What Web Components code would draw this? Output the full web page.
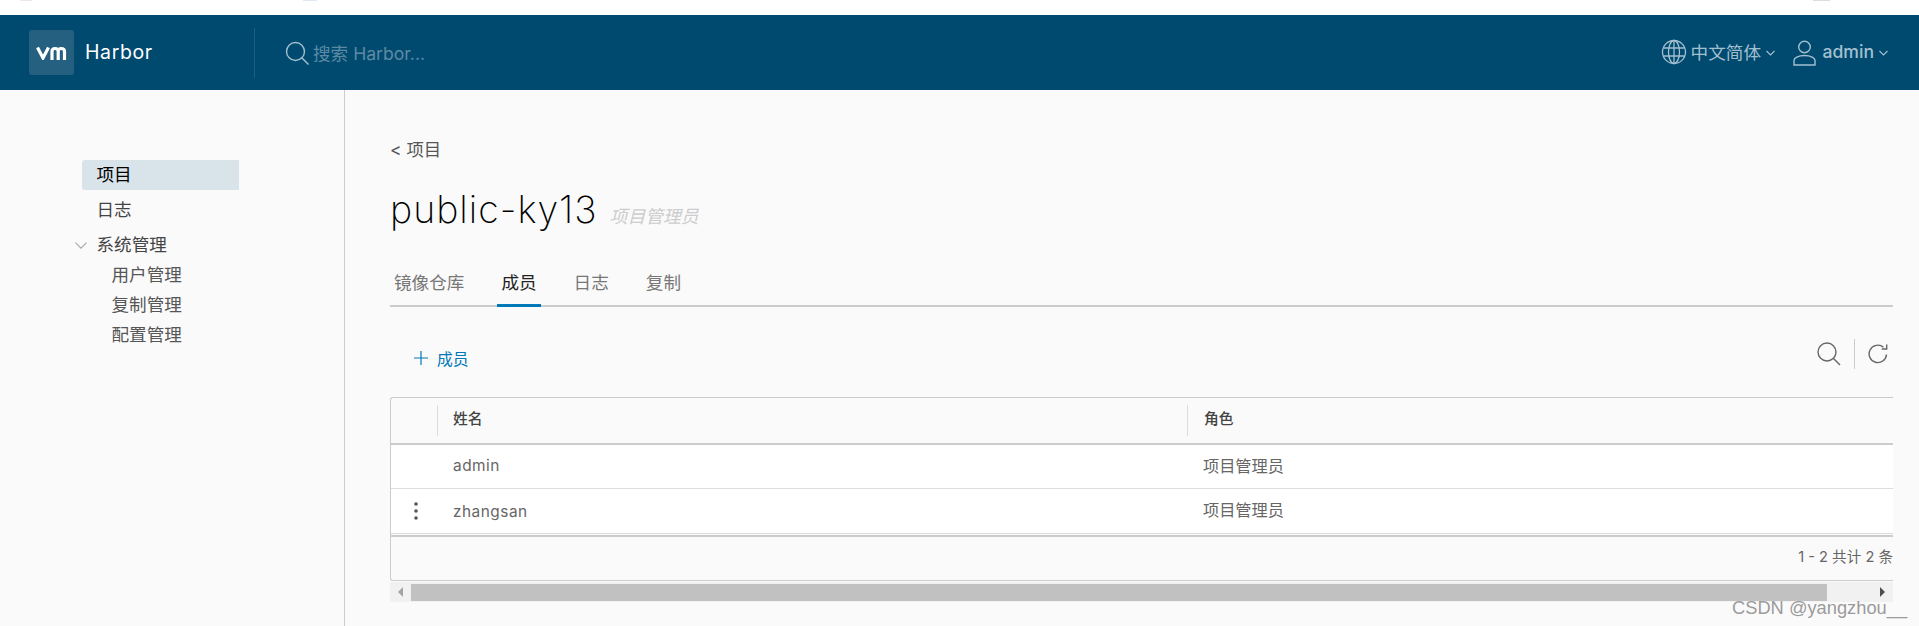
<!DOCTYPE html>
<html lang="zh"><head><meta charset="utf-8"><title>Harbor</title>
<style>
html,body{margin:0;height:626px;overflow:hidden;background:#fafafa;font-family:Inter,"Noto Sans CJK SC",sans-serif}
</style></head><body>
<harbor-app></harbor-app>
<script>
const def=(name,html)=>customElements.define(name,class extends HTMLElement{constructor(){super();this.attachShadow({mode:'open'}).innerHTML=html}});
def('harbor-header',`<style>
:host{display:flex;align-items:center;height:75px;background:#004a70;color:#fff;box-sizing:border-box}
.logo{width:45px;height:45px;margin-left:29px;border-radius:3px;background:#256080;display:flex;align-items:center;justify-content:center}
.name{margin-left:11px;width:169px;font-size:19.500px;letter-spacing:.6px;margin-top:-1px}
.sep{width:1px;height:50px;background:#1d5f82}
.s{margin-left:30px;display:block}
.ph{margin-left:4px;font-size:17.6px;color:#5d8aa3;flex:1;margin-top:-1px}
.r{display:flex;align-items:center;color:#a3c0cf;font-size:17.6px;margin-top:-2px}
.u{font-weight:500;font-size:17.6px}
svg{display:block}
</style>
<div class="logo"><svg width="31" height="14" viewBox="0 0 31 14" fill="none" stroke="#fff" stroke-width="3.200"><path d="M1.500 1.500l5.500 10.500 5.500-10.500"/><path d="M16 14V5.500c0-2 1.200-3 3-3s3.200 1 3.200 3V14M22.200 5.500c0-2 1.200-3 3-3s3.300 1 3.300 3V14"/></svg></div>
<div class="name">Harbor</div><div class="sep"></div>
<svg class="s" width="24" height="24" viewBox="0 0 24 24" fill="none" stroke="#a3c0cf" stroke-width="1.400"><circle cx="10.500" cy="10.500" r="9"/><path d="M17 17l6.500 6.500"/></svg>
<div class="ph">搜索 Harbor...</div>
<div class="r">
<svg width="26" height="26" viewBox="0 0 26 26" fill="none" stroke="#a3c0cf" stroke-width="1.300" style="margin-right:4px"><circle cx="13" cy="13" r="11.500"/><ellipse cx="13" cy="13" rx="5.500" ry="11.500"/><path d="M13 1.500v23M2.500 9h21M2.500 17h21"/></svg>
<span>中文简体</span><svg width="9" height="6" viewBox="0 0 9 6" fill="none" stroke="#a3c0cf" stroke-width="1.100" style="margin:2px 18px 0 5px"><path d="M.5 1l4 4 4-4"/></svg>
<svg width="23" height="26" viewBox="0 0 23 26" fill="none" stroke="#a3c0cf" stroke-width="1.400" style="margin-right:6.500px;margin-top:2px"><circle cx="11.500" cy="7" r="5.800"/><path d="M1 25v-4.500c0-2.500 4-5 10.500-5s10.500 2.500 10.500 5V25z"/></svg>
<span class="u">admin</span><svg width="9" height="6" viewBox="0 0 9 6" fill="none" stroke="#a3c0cf" stroke-width="1.100" style="margin:2px 31px 0 5px"><path d="M.5 1l4 4 4-4"/></svg>
</div>`);
def('nav-item',`<style>
:host{display:block;box-sizing:border-box;width:157px;margin-left:82px;height:30px;line-height:30px;padding-left:14.500px;font-size:17.6px;color:#444;border-radius:3px 0 0 3px;position:relative;white-space:nowrap}
:host([active]){background:#d9e4ea;color:#000}
:host([sub]){height:29.800px;line-height:29.800px;padding-left:29.500px;color:#565656}
</style><slot></slot><slot name="toggle"></slot>`);
def('side-nav',`<style>
:host{display:block;height:536px;border-right:1px solid #ccc;padding-top:70px;flex:none;box-sizing:border-box;width:345px}
.g{display:flex;flex-direction:column;gap:5px}
svg{position:absolute;left:-7px;top:12px}
</style>
<div class="g"><nav-item active>项目</nav-item><nav-item>日志</nav-item>
<nav-item>系统管理<svg slot="toggle" width="12" height="7" viewBox="0 0 12 7" fill="none" stroke="#aaa" stroke-width="1.200"><path d="M.5 .7l5.500 5.500 5.500-5.500"/></svg></nav-item></div>
<nav-item sub>用户管理</nav-item><nav-item sub>复制管理</nav-item><nav-item sub>配置管理</nav-item>`);
def('tab-bar',`<style>
:host{display:flex;height:45px;border-bottom:2px solid #ccc;box-sizing:border-box;margin-top:28px;font-size:17.6px;color:#777}
span{line-height:42px;height:43px;padding:0 4px;box-sizing:border-box;margin-right:29px}
span:first-child{padding-left:3px;margin-right:32px}
.on{color:#222;border-bottom:3px solid #0079b8;height:45px;margin-bottom:-2px}
</style><span>镜像仓库</span><span class="on">成员</span><span>日志</span><span>复制</span>`);
def('tool-bar',`<style>
:host{display:flex;align-items:center;height:30px;margin-top:32px;color:#0079b8;font-size:15.800px}
.add{display:flex;align-items:center;gap:9px;margin-left:24px;flex:1;margin-top:8px}
.sep{width:1px;height:30px;background:#ccc;margin:0 13px}
svg{display:block}
</style>
<div class="add"><svg width="14" height="14" viewBox="0 0 14 14" stroke="#0079b8" stroke-width="1.200"><path d="M7 0v14M0 7h14"/></svg><span>成员</span></div>
<svg width="24" height="24" viewBox="0 0 24 24" fill="none" stroke="#666" stroke-width="1.400"><circle cx="10" cy="10" r="9"/><path d="M16.500 16.500l6.500 6.500"/></svg>
<div class="sep"></div>
<svg width="20" height="20" viewBox="0 0 20 20" fill="none" stroke="#666" stroke-width="1.400" style="margin-right:5px"><path d="M18.500 10.500a8.700 8.700 0 1 1-3-7.200"/><path d="M18.700 .5v4.500h-5"/></svg>`);
def('member-table',`<style>
:host{display:block;margin-top:28px;width:1503px;overflow:hidden}
.t{border:1px solid #ccc;border-right:0;border-radius:3px 0 0 3px;box-sizing:border-box;height:184px;color:#666;font-size:15.4px}
.r{display:grid;grid-template-columns:46px 750px 1fr;align-items:center}
.r>div{padding-left:16px;white-space:nowrap}
.h{height:47px;border-bottom:2px solid #ccc;box-sizing:border-box;font-size:14.8px;color:#444;font-weight:500}
.h>div{height:31px;line-height:29px;border-left:1px solid #ddd;margin-top:-1px;padding-left:15px}
.h>div:first-child{border:0}
.b{background:#fff;border-bottom:1px solid #ddd;box-sizing:border-box;letter-spacing:.5px}
.b>.c{letter-spacing:0;font-size:16.200px;margin-top:-4px}
.b>.up{margin-top:-2px}
.r>.k{padding:0;display:flex;justify-content:center;margin-left:4px}
.f{border-top:2px solid #ccc;margin-top:1px;height:43px;line-height:41px;text-align:right;font-size:14.6px;color:#666;white-space:nowrap}
.sb{display:flex;align-items:center;height:20px;margin-top:1px;background:#f1f1f1}
.th{width:1416px;height:17px;background:#c1c1c1;margin-left:21px}
.a{width:0;height:0;border:5px solid transparent}
.l{border-right-color:#a3a3a3;border-left:0;margin-left:8px;margin-right:-13px}
.e{border-left-color:#505050;border-right:0;margin-left:53px}
</style>
<div class="t">
<div class="r h"><div></div><div>姓名</div><div style="padding-left:16px">角色</div></div>
<div class="r b" style="height:44px"><div></div><div class="up">admin</div><div class="c">项目管理员</div></div>
<div class="r b" style="height:45px"><div class="k"><svg width="4" height="18" viewBox="0 0 4 18" fill="#555"><circle cx="2" cy="2" r="1.800"/><circle cx="2" cy="9" r="1.800"/><circle cx="2" cy="16" r="1.800"/></svg></div><div>zhangsan</div><div class="c">项目管理员</div></div>
<div class="f">1 - 2 共计 2 条</div>
</div>
<div class="sb"><span class="a l"></span><div class="th"></div><span class="a e"></span></div>`);
def('project-page',`<style>
:host{display:block;flex:1;padding:48px 26px 0 45px;min-width:0}
.back{height:24px;line-height:24px;font-size:17.400px;color:#565656}
.tw{display:flex;align-items:baseline;margin-top:24px;height:48px;line-height:48px}
h1{margin:0;font-size:37.500px;font-weight:200;color:#000;letter-spacing:1px}
em{margin-left:12px;font-size:17.800px;color:#ccc}
</style>
<div class="back">&lt; 项目</div>
<div class="tw"><h1>public-ky13</h1><em>项目管理员</em></div>
<tab-bar></tab-bar><tool-bar></tool-bar><member-table></member-table>`);
def('harbor-app',`<style>
:host{display:block;position:relative;height:626px;overflow:hidden;background:#fafafa}
.top{height:15px;background-color:#fff;background-image:linear-gradient(#dfe7f8,#dfe7f8),linear-gradient(#f0e6f0,#f0e6f0),linear-gradient(#ddd,#ddd);background-size:14px 1px,12px 1px,17px 1px;background-position:303px 0,20px 0,1813px 0;background-repeat:no-repeat}
.m{display:flex;height:536px}
.wm{position:absolute;left:1732px;top:597px;font:18.300px "Liberation Sans",sans-serif;color:#9a9a9a;text-shadow:0 0 1px #fff;white-space:nowrap}
</style>
<div class="top"></div><harbor-header></harbor-header>
<div class="m"><side-nav></side-nav><project-page></project-page></div>
<div class="wm">CSDN @yangzhou__</div>`);
</script></body></html>
